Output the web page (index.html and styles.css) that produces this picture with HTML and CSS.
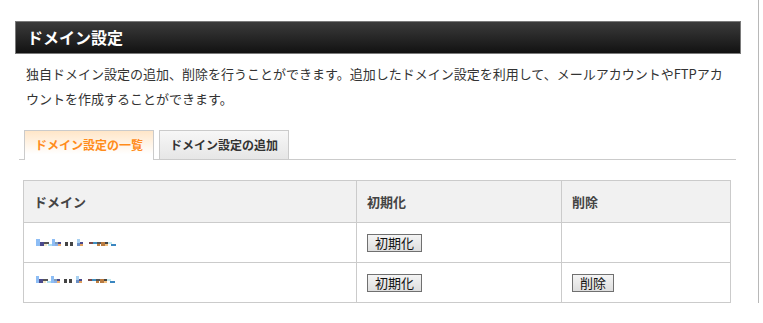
FILE: index.html
```html
<!DOCTYPE html>
<html>
<head>
    <title>ドメイン設定</title>
    <meta charset="UTF-8">
    <link rel="stylesheet" href="styles.css">
</head>
<body>
    <div class="page">
        <div class="main">
            <h2 class="page-title">ドメイン設定</h2>
            <p class="lead">独自ドメイン設定の追加、削除を行うことができます。追加したドメイン設定を利用して、メールアカウントやFTPアカウントを作成することができます。</p>
            <ul class="tabs">
                <li class="tab active">ドメイン設定の一覧</li>
                <li class="tab">ドメイン設定の追加</li>
            </ul>
            <table class="domain-table">
                <tr>
                    <th class="col-domain">ドメイン</th>
                    <th class="col-init">初期化</th>
                    <th class="col-del">削除</th>
                </tr>
                <tr>
                    <td><svg class="masked" width="80" height="7" viewBox="0 0 80 7">
                        <rect x="0" y="0" width="4" height="7" fill="#8dbdf5"/>
                        <rect x="4" y="3" width="4" height="4" fill="#4b4a8c"/>
                        <rect x="8" y="3" width="5" height="2" fill="#555"/>
                        <rect x="8" y="5" width="3" height="2" fill="#f3e9c8"/>
                        <rect x="12" y="5" width="4" height="2" fill="#aee0f0"/>
                        <rect x="16" y="0" width="3" height="7" fill="#8dbdf5"/>
                        <rect x="19" y="3" width="3" height="2" fill="#7f9fb8"/>
                        <rect x="19" y="5" width="3" height="2" fill="#8db0e8"/>
                        <rect x="22" y="3" width="3" height="2" fill="#4b4a8c"/>
                        <rect x="22" y="5" width="3" height="2" fill="#f0b070"/>
                        <rect x="29" y="3" width="3" height="4" fill="#444"/>
                        <rect x="34" y="3" width="3" height="4" fill="#444"/>
                        <rect x="41" y="0" width="3" height="4" fill="#a8d0f0"/>
                        <rect x="41" y="4" width="3" height="3" fill="#6a90c8"/>
                        <rect x="44" y="3" width="3" height="2" fill="#4b4a8c"/>
                        <rect x="44" y="5" width="3" height="2" fill="#e0a060"/>
                        <rect x="53" y="3" width="4" height="2" fill="#7a4a4a"/>
                        <rect x="57" y="3" width="4" height="2" fill="#4090c0"/>
                        <rect x="61" y="3" width="4" height="2" fill="#555"/>
                        <rect x="61" y="5" width="3" height="2" fill="#c08040"/>
                        <rect x="65" y="3" width="4" height="4" fill="#b87a40"/>
                        <rect x="69" y="3" width="3" height="2" fill="#444"/>
                        <rect x="69" y="5" width="3" height="2" fill="#f0c080"/>
                        <rect x="72" y="3" width="4" height="2" fill="#bfe8f0"/>
                        <rect x="75" y="5" width="5" height="2" fill="#3a86c0"/>
                    </svg></td>
                    <td><button class="btn">初期化</button></td>
                    <td></td>
                </tr>
                <tr>
                    <td><svg class="masked masked-high" width="80" height="7" viewBox="0 0 80 7">
                        <rect x="0" y="0" width="3" height="7" fill="#8dbdf5"/>
                        <rect x="3" y="3" width="4" height="4" fill="#4b4a8c"/>
                        <rect x="7" y="3" width="5" height="2" fill="#555"/>
                        <rect x="7" y="5" width="3" height="2" fill="#f3e9c8"/>
                        <rect x="11" y="5" width="4" height="2" fill="#aee0f0"/>
                        <rect x="15" y="0" width="3" height="7" fill="#8dbdf5"/>
                        <rect x="18" y="3" width="3" height="2" fill="#7f9fb8"/>
                        <rect x="18" y="5" width="3" height="2" fill="#8db0e8"/>
                        <rect x="21" y="3" width="3" height="2" fill="#4b4a8c"/>
                        <rect x="21" y="5" width="3" height="2" fill="#f0b070"/>
                        <rect x="28" y="3" width="3" height="4" fill="#444"/>
                        <rect x="33" y="3" width="3" height="4" fill="#444"/>
                        <rect x="40" y="0" width="3" height="4" fill="#a8d0f0"/>
                        <rect x="40" y="4" width="3" height="3" fill="#6a90c8"/>
                        <rect x="43" y="3" width="3" height="2" fill="#4b4a8c"/>
                        <rect x="43" y="5" width="3" height="2" fill="#e0a060"/>
                        <rect x="52" y="3" width="4" height="2" fill="#7a4a4a"/>
                        <rect x="56" y="3" width="4" height="2" fill="#4090c0"/>
                        <rect x="60" y="3" width="4" height="2" fill="#555"/>
                        <rect x="60" y="5" width="3" height="2" fill="#c08040"/>
                        <rect x="64" y="3" width="4" height="4" fill="#b87a40"/>
                        <rect x="68" y="3" width="3" height="2" fill="#444"/>
                        <rect x="68" y="5" width="3" height="2" fill="#f0c080"/>
                        <rect x="71" y="3" width="4" height="2" fill="#bfe8f0"/>
                        <rect x="74" y="5" width="5" height="2" fill="#3a86c0"/>
                    </svg></td>
                    <td><button class="btn">初期化</button></td>
                    <td><button class="btn">削除</button></td>
                </tr>
                <tr>
                    <td></td>
                    <td></td>
                    <td></td>
                </tr>
            </table>
        </div>
    </div>
</body>
</html>
```

FILE: styles.css
```css
body {
    margin: 0;
    padding: 0;
    background-color: #fff;
    font-family: "Noto Sans CJK JP", "Noto Sans", sans-serif;
    font-size: 13px;
    color: #333;
}
.page {
    width: 758px;
    height: 303px;
    overflow: hidden;
    border-right: 1px solid #b8b8b8;
}
.main {
    width: 726px;
    margin-left: 15px;
    padding-top: 21px;
}
.page-title {
    margin: 0;
    height: 31px;
    line-height: 31px;
    padding: 0 11px;
    border: 1px solid #7a7a7a;
    background: linear-gradient(#3b3b3b, #121212);
    color: #fff;
    font-size: 16px;
    font-weight: bold;
}
.lead {
    margin: 7px 12px 0 11px;
    line-height: 25px;
}
.tabs {
    list-style: none;
    margin: 19px 5px 0 4px;
    padding: 0 0 0 5px;
    display: flex;
    gap: 5px;
    border-bottom: 1px solid #cbcbcb;
}
.tab {
    height: 28px;
    line-height: 28px;
    padding: 0 10px;
    border: 1px solid #cbcbcb;
    border-bottom: none;
    background: linear-gradient(#f7f7f7, #e6e6e6);
    font-size: 12px;
    font-weight: bold;
    color: #333;
}
.tab.active {
    height: 29px;
    margin-bottom: -1px;
    background: linear-gradient(#ffe6c8, #fff 80%);
    color: #ff8c1a;
}
.domain-table {
    margin: 20px 0 0 8px;
    width: 708px;
    border-collapse: collapse;
    border: 1px solid #cbcbcb;
}
.domain-table th,
.domain-table td {
    border: 1px solid #cbcbcb;
    padding: 0 10px;
    text-align: left;
}
.domain-table th {
    height: 41px;
    background-color: #f1f1f1;
    font-weight: bold;
    color: #444;
}
.domain-table td {
    height: 39px;
}
.col-domain {
    width: 312px;
}
.col-init {
    width: 184px;
}
.masked {
    display: block;
    margin-left: 2px;
}
.masked-high {
    margin-bottom: 7px;
}
.btn {
    height: 18px;
    padding: 0 7px;
    margin: 0;
    border: 1px solid #707070;
    border-radius: 0;
    background: linear-gradient(#f4f4f4, #dedede);
    font-family: "Noto Sans CJK JP", sans-serif;
    font-size: 13px;
    font-weight: normal;
    line-height: 16px;
    color: #111;
}
```
